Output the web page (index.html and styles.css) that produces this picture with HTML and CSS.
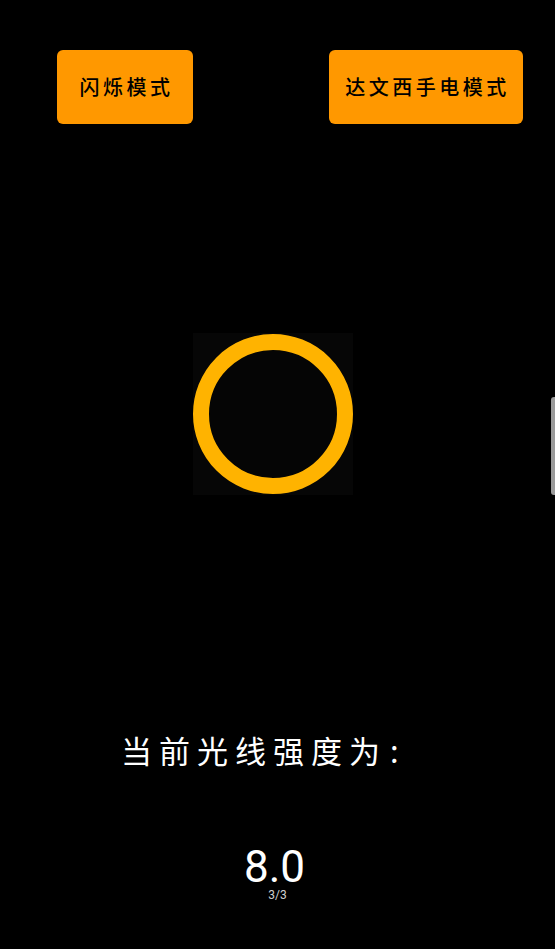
FILE: index.html
```html
<!DOCTYPE html>
<html lang="zh-CN">
<head>
    <meta charset="UTF-8">
    <meta name="viewport" content="width=device-width, initial-scale=1.0">
    <title>手电筒</title>
    <link rel="stylesheet" href="styles.css">
</head>
<body>
    <div class="screen">
        <div class="top-bar">
            <div class="mode-btn flash">闪烁模式</div>
            <div class="mode-btn darwin">达文西手电模式</div>
        </div>

        <div class="switch-box">
            <div class="ring"></div>
        </div>

        <div class="light-label">当前光线强度为<span class="colon">:</span></div>

        <div class="light-value">8.0</div>
        <div class="page-count">3/3</div>

        <div class="side-handle"></div>
    </div>
</body>
</html>
```

FILE: styles.css
```css
/* Base */
html, body {
    margin: 0;
    padding: 0;
    background-color: #000;
}

.screen {
    position: relative;
    width: 555px;
    height: 949px;
    overflow: hidden;
    background-color: #000;
    font-family: "Noto Sans CJK SC", "Noto Sans", sans-serif;
}

/* Mode buttons */
.top-bar {
    display: flex;
    padding-top: 50px;
    padding-left: 57px;
}

.mode-btn {
    height: 74px;
    line-height: 74px;
    background-color: #ff9800;
    border-radius: 6px;
    color: #000;
    font-size: 20px;
    font-weight: 500;
    letter-spacing: 3.5px;
    text-align: center;
    box-sizing: border-box;
}

.flash {
    width: 136px;
    padding-left: 3px;
}

.darwin {
    width: 194px;
    margin-left: 136px;
    padding-left: 3px;
}

/* Switch ring */
.switch-box {
    width: 160px;
    height: 162px;
    margin-top: 209px;
    margin-left: 193px;
    background-color: #060606;
    display: flex;
    align-items: center;
    justify-content: center;
}

.ring {
    width: 128px;
    height: 128px;
    border: 16px solid #ffb300;
    border-radius: 50%;
    background-color: #050505;
}

/* Light strength */
.light-label {
    margin-top: 235px;
    padding-left: 121px;
    color: #fff;
    font-size: 31px;
    line-height: 40px;
    letter-spacing: 7px;
}

.light-label .colon {
    margin-left: 3px;
}

.light-value {
    margin-top: 79px;
    padding-right: 6px;
    text-align: center;
    color: #fff;
    font-family: Roboto, "Noto Sans", sans-serif;
    font-size: 44px;
    line-height: 36px;
}

.page-count {
    margin-top: 4px;
    text-align: center;
    color: #cfcfcf;
    font-family: Roboto, "Noto Sans", sans-serif;
    font-size: 12px;
    line-height: 12px;
}

/* Edge handle overlay */
.side-handle {
    position: absolute;
    right: 0;
    top: 397px;
    width: 4px;
    height: 98px;
    background-color: #9a9a9a;
    border-radius: 3px 0 0 3px;
}
```
